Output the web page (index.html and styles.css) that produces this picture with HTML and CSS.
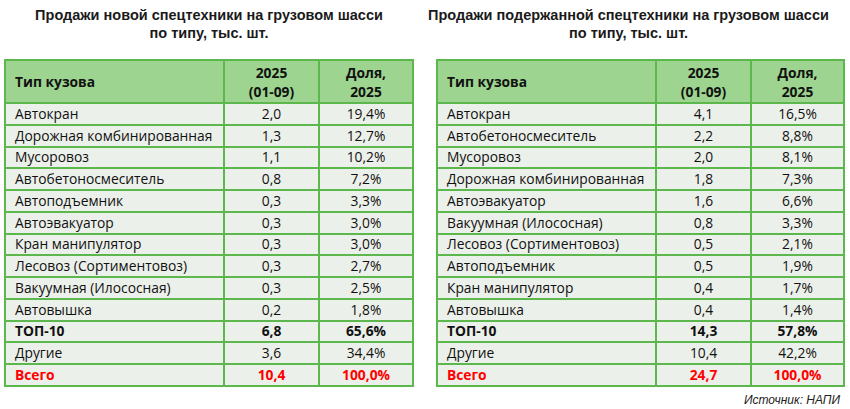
FILE: index.html
```html
<!DOCTYPE html>
<html lang="ru">
<head>
<meta charset="utf-8">
<link rel="stylesheet" href="styles.css">
</head>
<body>
<div class="page">
  <div class="panels">
    <section class="panel panel-left">
      <h2 class="title">Продажи новой спецтехники на грузовом шасси<br>по типу, тыс. шт.</h2>
      <table class="grid">
        <colgroup><col class="c1"><col class="c2"><col class="c3"></colgroup>
        <thead>
          <tr><th class="name">Тип кузова</th><th>2025<br>(01-09)</th><th>Доля,<br>2025</th></tr>
        </thead>
        <tbody>
          <tr><td class="name">Автокран</td><td>2,0</td><td>19,4%</td></tr>
          <tr><td class="name">Дорожная комбинированная</td><td>1,3</td><td>12,7%</td></tr>
          <tr><td class="name">Мусоровоз</td><td>1,1</td><td>10,2%</td></tr>
          <tr><td class="name">Автобетоносмеситель</td><td>0,8</td><td>7,2%</td></tr>
          <tr><td class="name">Автоподъемник</td><td>0,3</td><td>3,3%</td></tr>
          <tr><td class="name">Автоэвакуатор</td><td>0,3</td><td>3,0%</td></tr>
          <tr><td class="name">Кран манипулятор</td><td>0,3</td><td>3,0%</td></tr>
          <tr><td class="name">Лесовоз (Сортиментовоз)</td><td>0,3</td><td>2,7%</td></tr>
          <tr><td class="name">Вакуумная (Илососная)</td><td>0,3</td><td>2,5%</td></tr>
          <tr><td class="name">Автовышка</td><td>0,2</td><td>1,8%</td></tr>
          <tr class="top"><td class="name">ТОП-10</td><td>6,8</td><td>65,6%</td></tr>
          <tr><td class="name">Другие</td><td>3,6</td><td>34,4%</td></tr>
          <tr class="total"><td class="name">Всего</td><td>10,4</td><td>100,0%</td></tr>
        </tbody>
      </table>
    </section>
    <section class="panel panel-right">
      <h2 class="title">Продажи подержанной спецтехники на грузовом шасси<br>по типу, тыс. шт.</h2>
      <table class="grid">
        <colgroup><col class="c1"><col class="c2"><col class="c3"></colgroup>
        <thead>
          <tr><th class="name">Тип кузова</th><th>2025<br>(01-09)</th><th>Доля,<br>2025</th></tr>
        </thead>
        <tbody>
          <tr><td class="name">Автокран</td><td>4,1</td><td>16,5%</td></tr>
          <tr><td class="name">Автобетоносмеситель</td><td>2,2</td><td>8,8%</td></tr>
          <tr><td class="name">Мусоровоз</td><td>2,0</td><td>8,1%</td></tr>
          <tr><td class="name">Дорожная комбинированная</td><td>1,8</td><td>7,3%</td></tr>
          <tr><td class="name">Автоэвакуатор</td><td>1,6</td><td>6,6%</td></tr>
          <tr><td class="name">Вакуумная (Илососная)</td><td>0,8</td><td>3,3%</td></tr>
          <tr><td class="name">Лесовоз (Сортиментовоз)</td><td>0,5</td><td>2,1%</td></tr>
          <tr><td class="name">Автоподъемник</td><td>0,5</td><td>1,9%</td></tr>
          <tr><td class="name">Кран манипулятор</td><td>0,4</td><td>1,7%</td></tr>
          <tr><td class="name">Автовышка</td><td>0,4</td><td>1,4%</td></tr>
          <tr class="top"><td class="name">ТОП-10</td><td>14,3</td><td>57,8%</td></tr>
          <tr><td class="name">Другие</td><td>10,4</td><td>42,2%</td></tr>
          <tr class="total"><td class="name">Всего</td><td>24,7</td><td>100,0%</td></tr>
        </tbody>
      </table>
    </section>
  </div>
  <div class="source">Источник: НАПИ</div>
</div>
</body>
</html>
```

FILE: styles.css
```css
html, body {
  margin: 0;
  padding: 0;
  background: #ffffff;
}
.page {
  width: 850px;
  height: 409px;
  overflow: hidden;
}
.panels {
  display: flex;
  gap: 22px;
  padding: 6px 0 0 4px;
}
.panel {
  display: flex;
  flex-direction: column;
  align-items: center;
}
.panel-left { width: 410px; }
.panel-right { width: 409px; }
.title {
  margin: 0 0 17px 0;
  font-family: "Liberation Sans", Arial, sans-serif;
  font-weight: bold;
  font-size: 14.5px;
  line-height: 18px;
  color: #1a1a1a;
  text-align: center;
  white-space: nowrap;
}
.panel-right .title { margin-right: 24px; }
.grid {
  width: 100%;
  border-collapse: collapse;
  table-layout: fixed;
  font-family: "Open Sans", "Noto Sans", sans-serif;
  font-size: 13.8px;
  color: #111;
  border: 2px solid #5cb84c;
}
.c1 { width: 219px; }
.c2 { width: 95px; }
.grid th, .grid td {
  border: 2px solid #5cb84c;
  padding: 0 4px;
  text-align: center;
  white-space: nowrap;
}
.grid th {
  background: #9dd48f;
  font-weight: bold;
  height: 41px;
  line-height: 19px;
}
.grid td {
  background: #ecf0ea;
  height: 19.75px;
  line-height: 18px;
}
.grid .name {
  text-align: left;
  padding-left: 9px;
}
.top td { font-weight: bold; }
.total td { font-weight: bold; color: #ff0000; }
.source {
  text-align: right;
  padding: 6px 10px 0 0;
  font-family: "Liberation Sans", Arial, sans-serif;
  font-style: italic;
  font-size: 12px;
  line-height: 14px;
  color: #222;
}
```
